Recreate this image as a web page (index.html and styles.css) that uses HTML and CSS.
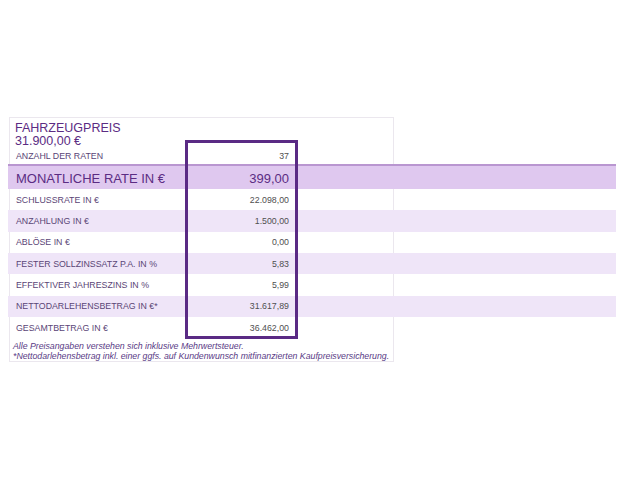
FILE: index.html
```html
<!DOCTYPE html>
<html lang="de">
<head>
<meta charset="utf-8">
<title>Finanzierung</title>
<link rel="stylesheet" href="styles.css">
</head>
<body>
<div class="card">
  <div class="title">FAHRZEUGPREIS</div>
  <div class="title">31.900,00 €</div>
  <div class="rows">
    <div class="row row-count"><span class="label">ANZAHL DER RATEN</span><span class="value">37</span></div>
    <div class="row row-main"><span class="label">MONATLICHE RATE IN €</span><span class="value">399,00</span></div>
    <div class="row"><span class="label">SCHLUSSRATE IN €</span><span class="value">22.098,00</span></div>
    <div class="row row-alt"><span class="label">ANZAHLUNG IN €</span><span class="value">1.500,00</span></div>
    <div class="row"><span class="label">ABLÖSE IN €</span><span class="value">0,00</span></div>
    <div class="row row-alt"><span class="label">FESTER SOLLZINSSATZ P.A. IN %</span><span class="value">5,83</span></div>
    <div class="row"><span class="label">EFFEKTIVER JAHRESZINS IN %</span><span class="value">5,99</span></div>
    <div class="row row-alt"><span class="label">NETTODARLEHENSBETRAG IN €*</span><span class="value">31.617,89</span></div>
    <div class="row"><span class="label">GESAMTBETRAG IN €</span><span class="value">36.462,00</span></div>
  </div>
  <p class="note">Alle Preisangaben verstehen sich inklusive Mehrwertsteuer.<br>*Nettodarlehensbetrag inkl. einer ggfs. auf Kundenwunsch mitfinanzierten Kaufpreisversicherung.</p>
  <div class="frame"></div>
</div>
</body>
</html>
```
FILE: styles.css
```css
html, body {
  margin: 0;
  padding: 0;
  background: #ffffff;
}
body {
  padding: 117px 0 0 9px;
  font-family: "Liberation Sans", Arial, sans-serif;
}
.card {
  position: relative;
  box-sizing: border-box;
  width: 385px;
  height: 245px;
  border: 1px solid #ebe7ee;
  padding-top: 4px;
}
.title {
  padding-left: 5px;
  font-size: 12.5px;
  line-height: 12.5px;
  color: #5b2c83;
}
.rows {
  margin-left: -2px;
  width: 608px;
}
.row {
  display: grid;
  grid-template-columns: 177px 113px 1fr;
  align-items: center;
  height: 21.33px;
  font-size: 8.8px;
}
.row-alt {
  background: #efe5f8;
}
.row-count {
  height: 17px;
}
.row-main {
  height: 22px;
  padding-top: 1px;
  border-top: 2px solid #b996d0;
  background: #dfc8ef;
  font-size: 13px;
}
.row-main .label,
.row-main .value {
  color: #5b2c83;
}
.label {
  padding-left: 8px;
  color: #5a4576;
  white-space: nowrap;
}
.value {
  text-align: right;
  padding-right: 9px;
  color: #505050;
}
.note {
  margin: 3px 0 0 3px;
  font-size: 8.8px;
  letter-spacing: -0.03px;
  line-height: 10px;
  font-style: italic;
  color: #5a3c86;
  white-space: nowrap;
}
.frame {
  position: absolute;
  left: 175px;
  top: 22px;
  width: 113px;
  height: 199px;
  box-sizing: border-box;
  border: 3.5px solid #5a2a84;
}
```
